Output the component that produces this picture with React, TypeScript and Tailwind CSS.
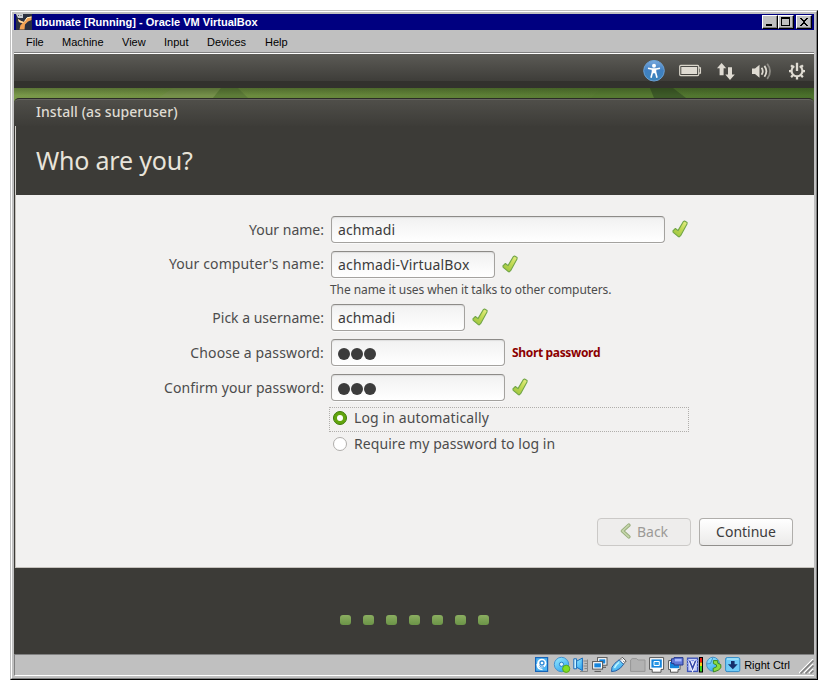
import type { ReactNode } from "react";

const UI = "font-['Noto_Sans','Open_Sans',sans-serif]";

function Check() {
  return (
    <svg width="16" height="18" viewBox="0 0 16 18" className="mb-[2px] shrink-0">
      <defs>
        <linearGradient id="chk" x1="1" y1="0" x2="0.3" y2="1">
          <stop offset="0" stopColor="#e8ee86" />
          <stop offset="0.5" stopColor="#c2da55" />
          <stop offset="1" stopColor="#a0c63e" />
        </linearGradient>
      </defs>
      <path d="M0.9 10.8 3.4 8.5 6 10.6 11.4 1.5 12.6 1.1 15.1 2.5 15 3.9 8.6 15.7 7.2 16.9 5.8 16.2 1.2 12.3Z" fill="url(#chk)" stroke="#72a646" strokeWidth="1.1" strokeLinejoin="round" />
    </svg>
  );
}

function Field({ label, width, children, after, className = "" }: { label: ReactNode; width: string; children: ReactNode; after: ReactNode; className?: string }) {
  return (
    <div className={`flex h-[27px] items-center ${className}`}>
      <div className="w-[308px] text-right text-[#4c4c4c] whitespace-nowrap">{label}</div>
      <div className={`ml-[7px] mr-[7px] flex h-[27px] shrink-0 items-center rounded-[4px] border border-[#a4a29f] border-t-[#8d8b88] bg-linear-to-b from-[#f1f1f1] via-[#f8f8f8] to-white pl-[6px] pt-[1px] text-[#3c3c3c] shadow-[inset_0_1px_1px_#dedede,0_1px_0_#fafafa] ${width}`}>
        {children}
      </div>
      {after}
    </div>
  );
}

function Dots() {
  return (
    <div className="flex gap-px pt-[2px]">
      {[0, 1, 2].map((i) => <span key={i} className="size-[12px] rounded-full bg-[#3c3c3c]" />)}
    </div>
  );
}

function WinButton({ children }: { children: ReactNode }) {
  return (
    <div className="flex h-[14px] w-[16px] items-center justify-center border border-t-white border-l-white border-r-black border-b-black bg-[#c0c0c0] shadow-[inset_-1px_-1px_0_#808080]">
      <svg width="14" height="12" viewBox="0 0 14 12" shapeRendering="crispEdges">{children}</svg>
    </div>
  );
}

function PanelIcons() {
  return (
    <svg width="172" height="34" viewBox="642 54.5 172 34" fill="none">
      <defs>
        <linearGradient id="acc" x1="0" y1="0" x2="0" y2="1">
          <stop offset="0" stopColor="#78a9df" />
          <stop offset="0.5" stopColor="#3f7fc0" />
          <stop offset="1" stopColor="#3d86bd" />
        </linearGradient>
      </defs>
      <circle cx="654" cy="71.2" r="10.3" fill="url(#acc)" stroke="#6aa0d4" strokeWidth="1" />
      <circle cx="654" cy="66.2" r="2" fill="#fff" />
      <path d="M648 68.7 652.5 69.6V72.5L651 78.3M660 68.7 655.5 69.6V72.5L657 78.3M652.5 69.6H655.5M652.8 69V74M655.2 69V74M654 69V73.5" stroke="#fff" strokeWidth="1.6" />
      <rect x="679.7" y="65.9" width="19" height="10.2" rx="1" stroke="#d9d5ca" strokeWidth="1.2" />
      <rect x="681.3" y="67.5" width="15.8" height="7" fill="#dfdbd2" />
      <path d="M699 68.4H700.5V73.6H699" stroke="#d9d5ca" strokeWidth="1.1" />
      <path d="M717 68.8 721.6 63.5 726.2 68.8H723.6V75.8H719.6V68.8ZM725.3 75H728V67.7H732V75H734.8L730 80.5Z" fill="#dfdbd2" />
      <path d="M752 69H755L759.5 65.2V78.2L755 74.6H752Z" fill="#dfdbd2" />
      <path d="M761.6 68.3Q764 71.8 761.6 75.3M764.4 66.4Q768.4 71.8 764.4 77.2" stroke="#dfdbd2" strokeWidth="1.8" />
      <path d="M767.2 64.2Q773 71.8 767.2 79.4" stroke="#8c8a84" strokeWidth="1.8" />
      <path d="M794.3 66.7A5.4 5.4 0 1 0 799.7 66.7" stroke="#dfdbd2" strokeWidth="2.1" />
      <path d="M797 63.2V71.5M789 71.7H792M802 71.7H805M791.1 65.8 793.2 67.9M802.9 65.8 800.8 67.9M791.1 77.6 793.2 75.5M802.9 77.6 800.8 75.5M797 77V80" stroke="#dfdbd2" strokeWidth="2.3" />
    </svg>
  );
}

function StatusIcons() {
  return (
    <svg width="208" height="18" viewBox="534 656 208 18" fill="none" className="shrink-0">
      <defs>
        <linearGradient id="sky" x1="0" y1="0" x2="0.6" y2="1">
          <stop offset="0" stopColor="#9cecff" />
          <stop offset="1" stopColor="#35a8f0" />
        </linearGradient>
      </defs>
      {/* hard disk */}
      <rect x="535.6" y="657.6" width="12" height="13.8" fill="#4fb6f4" stroke="#1764b8" strokeWidth="1.2" />
      <circle cx="541.8" cy="663.3" r="4.6" fill="#fff" />
      <circle cx="542" cy="663" r="2" fill="#fff" stroke="#2f8bd8" strokeWidth="1.3" />
      <path d="M537.2 664Q537.5 669.5 542.5 669.5" stroke="#fff" strokeWidth="1.6" />
      <path d="M539.5 665.5Q541 667.6 544 667" stroke="#2f8bd8" />
      {/* optical disc */}
      <circle cx="561.5" cy="664.5" r="7.2" fill="url(#sky)" stroke="#4392cf" />
      <circle cx="561.5" cy="664.3" r="2.1" fill="#d9f5ff" stroke="#2a7ec4" />
      <circle cx="566.2" cy="668.8" r="3.6" fill="#82df21" stroke="#55a81a" />
      {/* audio */}
      <path d="M583.5 661H587M584.5 663.5H587M583.5 666H587M584.5 668.5H587M580 671.5H587.5V659.5" stroke="#888" />
      <path d="M573.8 658.8H576.6V668.8H573.8Z" fill="#cdf3ff" stroke="#1a6dbb" />
      <path d="M576.6 661.2 582.4 658V670.6L576.6 667.2Z" fill="url(#sky)" stroke="#1a6dbb" />
      {/* network */}
      <g stroke="#555" fill="#fff">
        <rect x="597.6" y="657.6" width="9.4" height="7.6" />
        <path d="M601 667.3H606" />
        <rect x="599.3" y="659.3" width="6" height="4.2" fill="#1685dc" stroke="none" />
        <rect x="592.6" y="661.6" width="10" height="7.5" />
        <rect x="594.3" y="663.3" width="6.6" height="4.1" fill="#1685dc" stroke="none" />
        <path d="M594.5 671.4H601" />
      </g>
      {/* usb */}
      <path d="M619 660.5 622.2 657.3 626.2 661 623.2 664.3Z" fill="#fff" stroke="#555" />
      <path d="M621.5 659.8h1M623.3 661.4h1" stroke="#555" />
      <path d="M611.5 671.6Q610.8 667 615 663.2L619.2 659.8 623.6 664.3 620.2 668.3Q616 671.8 611.5 671.6Z" fill="url(#sky)" stroke="#285fa5" />
      <path d="M614.5 668Q616 664.5 619 662.5" stroke="#c0f5ff" strokeWidth="1.4" />
      {/* shared folder */}
      <path d="M630.6 671.4V660L632.2 658.6H636.5L638 660H645V671.4Z" fill="#b2b2b2" stroke="#969696" />
      {/* display */}
      <path d="M649.6 657.6H663.6V669.4H661V672.2H652.2V669.4H649.6Z" fill="#fff" stroke="#555" />
      <rect x="651.4" y="659.4" width="10.4" height="8.2" fill="#1685dc" />
      <path d="M654 661.5H659.3V665.5H654Z" fill="#2d9be8" stroke="#fff" />
      {/* recording */}
      <path d="M668.6 660.6H680V669.6H678V672.2H670.5V669.6H668.6Z" fill="#fff" stroke="#555" />
      <rect x="670" y="662" width="9" height="6.2" fill="#1685dc" />
      <path d="M671.5 658.8H674V657.6H683V665H674V663.4H671.5Z" fill="#6279d8" stroke="#26388d" />
      <rect x="675" y="659" width="6.5" height="2.4" fill="#a9b8ff" />
      {/* virtualization */}
      <rect x="687.6" y="658.2" width="10" height="13.2" fill="#c9d2fa" stroke="#3f55ba" strokeWidth="1.4" />
      <path d="M686.5 660.5H698.5M686.5 663.5H688M697 663.5H698.5M686.5 666.5H688M697 666.5H698.5" stroke="#7f92e5" />
      <path d="M689.6 660.5 692.6 668.5 695.6 660.5" stroke="#fff" strokeWidth="3" />
      <path d="M689.6 660.8 692.6 668.3 695.6 660.8" stroke="#3346a8" strokeWidth="1.6" />
      <rect x="699" y="657" width="4" height="15.5" fill="#000" />
      <rect x="700" y="658" width="2" height="4.5" fill="#f11b0e" />
      <rect x="700" y="662.5" width="2" height="3.5" fill="#ffc91a" />
      <rect x="700" y="666" width="2" height="5.5" fill="#32d71b" />
      {/* mouse integration */}
      <ellipse cx="713" cy="664.2" rx="6.4" ry="7" fill="url(#sky)" stroke="#468fc4" />
      <path d="M713 657.4 710.5 663.5 706.7 664" stroke="#468fc4" />
      <path d="M713.4 660.6 717.6 660.6 717.8 663.3 720.8 664.6Q722.2 668.3 718.2 670.3L713.5 672 713 668.5 716.6 666.8 716.4 664.8 713.4 663.6Z" fill="#8cdc42" stroke="#3f8a24" />
      {/* host key */}
      <rect x="725.6" y="657.6" width="14.2" height="14" rx="1.5" fill="#70ccf8" stroke="#328ac6" />
      <path d="M727 659H738.5" stroke="#c4f2ff" />
      <path d="M731 661H734.6V664.3H737.7L732.8 669.2 727.9 664.3H731Z" fill="#15306c" />
    </svg>
  );
}

function App() {
  return (
    <div className="h-[690px] w-[828px] bg-white pl-[10px] pt-[10px]">
      <div className="h-[670px] w-[808px] border border-l-[#c0c0c0] border-t-[#c0c0c0] border-r-black border-b-black">
        <div className="flex h-[668px] w-[806px] flex-col border border-l-white border-t-white border-r-[#808080] border-b-[#808080] bg-[#c0c0c0] p-[2px]">
          <div className="flex h-[16px] shrink-0 items-center bg-[#000080] pl-[2px] pr-[2px] text-white">
            <svg width="16" height="16" viewBox="0 0 16 16">
              <rect width="16" height="16" fill="#2a3040" />
              <path d="M0 0H7V4H2L1 2Z" fill="#c9ccd2" />
              <path d="M2 1.5H3M4.5 1.5H5.5" stroke="#555" />
              <path d="M2 5 5 7 8 8 11 3.5 15.5 2.5 15.5 6 12 7.5 9 10.5 8.5 15.5H3.5L4.5 11 6.5 9.5 3 8Z" fill="#f2a253" />
              <path d="M2 5 5 7 8 8 7 9 3 8Z" fill="#ffe0a8" />
              <path d="M8.5 7.5 11 3.8 15.5 3" stroke="#fff2cb" fill="none" />
            </svg>
            <span className="ml-[3px] grow font-['Liberation_Sans',Arial,sans-serif] text-[11px] font-bold leading-[16px] tracking-[0.01px]">ubumate [Running] - Oracle VM VirtualBox</span>
            <div className="flex">
              <WinButton><path d="M3 8H9V10H3Z" /></WinButton>
              <WinButton><path fillRule="evenodd" d="M2 1H11V10H2ZM3 3V9H10V3Z" /></WinButton>
              <div className="w-[2px]" />
              <WinButton><path d="M3 2H5V3H6V4H8V3H9V2H11V3H10V4H9V5H8V7H9V8H10V9H11V10H9V9H8V8H6V9H5V10H3V9H4V8H5V7H6V5H5V4H4V3H3Z" /></WinButton>
            </div>
          </div>
          <div className="flex h-[24px] shrink-0 items-center border-b border-white pl-[12px] pt-px font-['Liberation_Sans',Arial,sans-serif] text-[11px] text-black shadow-[inset_0_-1px_0_#808080]">
            <span className="w-[36px]">File</span>
            <span className="w-[60px]">Machine</span>
            <span className="w-[42px]">View</span>
            <span className="w-[43px]">Input</span>
            <span className="w-[58px]">Devices</span>
            <span>Help</span>
          </div>

          <div className="flex h-[600px] shrink-0 flex-col bg-[#3c3b37]">
            <div className="flex h-[34px] shrink-0 justify-end bg-[linear-gradient(#5c5b56,#3e3d39_27px,#32312d_27px,#32312d)]">
              <PanelIcons />
            </div>
            <div className="relative h-[10px] shrink-0">
              <svg width="800" height="15" viewBox="0 0 800 15" className="absolute left-0 top-0">
                <defs>
                  <linearGradient id="wall"><stop offset="0" stopColor="#7a994a" /><stop offset=".3" stopColor="#6b8b3e" /><stop offset="1" stopColor="#4a702b" /></linearGradient>
                  <linearGradient id="shade" x1="0" y1="0" x2="0" y2="1"><stop offset="0" stopColor="#1c2b0d" stopOpacity=".32" /><stop offset=".5" stopColor="#1c2b0d" stopOpacity="0" /></linearGradient>
                </defs>
                <rect width="800" height="15" fill="url(#wall)" />
                <path d="M159 0 144 10H199L207 0Z" fill="#75904a" />
                <path d="M207 0 199 10H234L224 0Z" fill="#5d7c38" />
                <path d="M589 0 577 10H640L636 0Z" fill="#557931" />
                <path d="M636 0H659L672 10H640Z" fill="#3d5a28" />
                <rect width="800" height="15" fill="url(#shade)" />
              </svg>
            </div>
            <div className="relative flex h-[28px] shrink-0 items-center rounded-t-[5px] border-t border-[#2b2a27] bg-linear-to-b from-[#504f4a] to-[#3d3c38] pb-[2px] pl-[22px] shadow-[inset_0_1px_0_#65645f]">
              <span className={`${UI} text-[14px] font-medium leading-[20px] tracking-[0.07px] text-[#dfdbd2]`}>Install (as superuser)</span>
            </div>
            <div className="ml-[1px] flex h-[69px] shrink-0 items-center border-l border-[#d2cfca] pl-[20px] pb-px">
              <h1 className={`${UI} text-[25px] leading-[32px] tracking-[-0.2px] text-[#e8e4da]`}>Who are you?</h1>
            </div>
            <div className={`ml-[1px] flex h-[373px] shrink-0 flex-col border-b border-l border-[#c6c2bd] bg-[#f2f1f0] pt-[21px] ${UI} text-[14px] leading-[20px]`}>
              <Field label="Your name:" width="w-[334px]" after={<Check />}><span className="tracking-[0.1px]">achmadi</span></Field>
              <Field label={<div className="pb-[2px] tracking-[0.1px]">Your computer's name:</div>} width="w-[164px]" after={<Check />} className="mt-[8px]"><span className="tracking-[0.16px]">achmadi-VirtualBox</span></Field>
              <div className="ml-[314px] flex h-[26px] items-center pb-[3px] text-[12px] tracking-[-0.08px] text-[#4c4c4c]">The name it uses when it talks to other computers.</div>
              <Field label="Pick a username:" width="w-[134px]" after={<Check />}><span className="tracking-[0.1px]">achmadi</span></Field>
              <Field label={<div className="tracking-[0.13px]">Choose a password:</div>} width="w-[174px]" after={<span className="text-[12px] font-bold tracking-[-0.34px] text-[#8b0000]">Short password</span>} className="mt-[8px]"><Dots /></Field>
              <Field label={<div className="tracking-[0.1px]">Confirm your password:</div>} width="w-[174px]" after={<Check />} className="mt-[8px]"><Dots /></Field>
              <div className="ml-[313px] mt-[6px] flex h-[25px] w-[360px] items-center border border-dotted border-[#b0aeab] pl-[3px] pb-[3px] tracking-[0.12px] text-[#4c4c4c]">
                <span className="mr-[7px] flex size-[14px] items-center justify-center rounded-full border border-[#3e7d08] bg-[#62a50d]">
                  <span className="size-[6px] rounded-full bg-white" />
                </span>
                Log in automatically
              </div>
              <div className="ml-[317px] flex h-[24px] items-center tracking-[0.07px] text-[#4c4c4c]">
                <span className="mr-[7px] size-[14px] rounded-full border border-[#b0aeab] bg-white" />
                Require my password to log in
              </div>
              <div className="mt-[62px] flex justify-end gap-[8px] pr-[21px]">
                <div className="flex h-[28px] w-[94px] items-center justify-center gap-[6px] rounded-[4px] border border-[#cbc9c7] bg-[#eeedec] text-[#9c9a97]">
                  <svg width="11" height="16" viewBox="0 0 11 16" fill="none" className="mb-[3px]">
                    <path d="M8.8 2.2 2.5 8 8.8 13.8" stroke="#98ad7d" strokeWidth="3.6" strokeLinejoin="round" strokeLinecap="round" />
                    <path d="M8.8 2.2 2.5 8 8.8 13.8" stroke="#c5d6aa" strokeWidth="1.6" strokeLinecap="round" />
                  </svg>
                  Back
                </div>
                <div className="flex h-[28px] w-[94px] items-center justify-center rounded-[4px] border border-[#b0aeab] border-b-[#918f8c] bg-linear-to-b from-white to-[#ebeae9] text-[#3c3c3c]">Continue</div>
              </div>
            </div>
            <div className="flex h-[86px] items-center justify-center gap-[12px] pt-[18px]">
              {[0, 1, 2, 3, 4, 5, 6].map((i) => (
                <span key={i} className="h-[10px] w-[11px] rounded-[3px] bg-linear-to-b from-[#8bae60] to-[#6b9447]" />
              ))}
            </div>
          </div>

          <div className="relative flex h-[22px] shrink-0 items-center justify-end border-b border-l border-t border-b-white border-l-[#808080] border-t-[#808080] pr-[24px]">
            <StatusIcons />
            <span className="ml-[2px] font-['Liberation_Sans',Arial,sans-serif] text-[11px] leading-[14px] text-black">Right Ctrl</span>
            <svg width="15" height="15" viewBox="0 0 15 15" className="absolute bottom-[1px] right-0" fill="none">
              <path d="M0 14 14 0M5 14 14 5M10 14 14 10" stroke="#fff" strokeWidth="1.2" />
              <path d="M1.5 14.5 14.5 1.5M6.5 14.5 14.5 6.5M11.5 14.5 14.5 11.5" stroke="#808080" strokeWidth="1.6" />
            </svg>
          </div>
        </div>
      </div>
    </div>
  );
}

export default App;
